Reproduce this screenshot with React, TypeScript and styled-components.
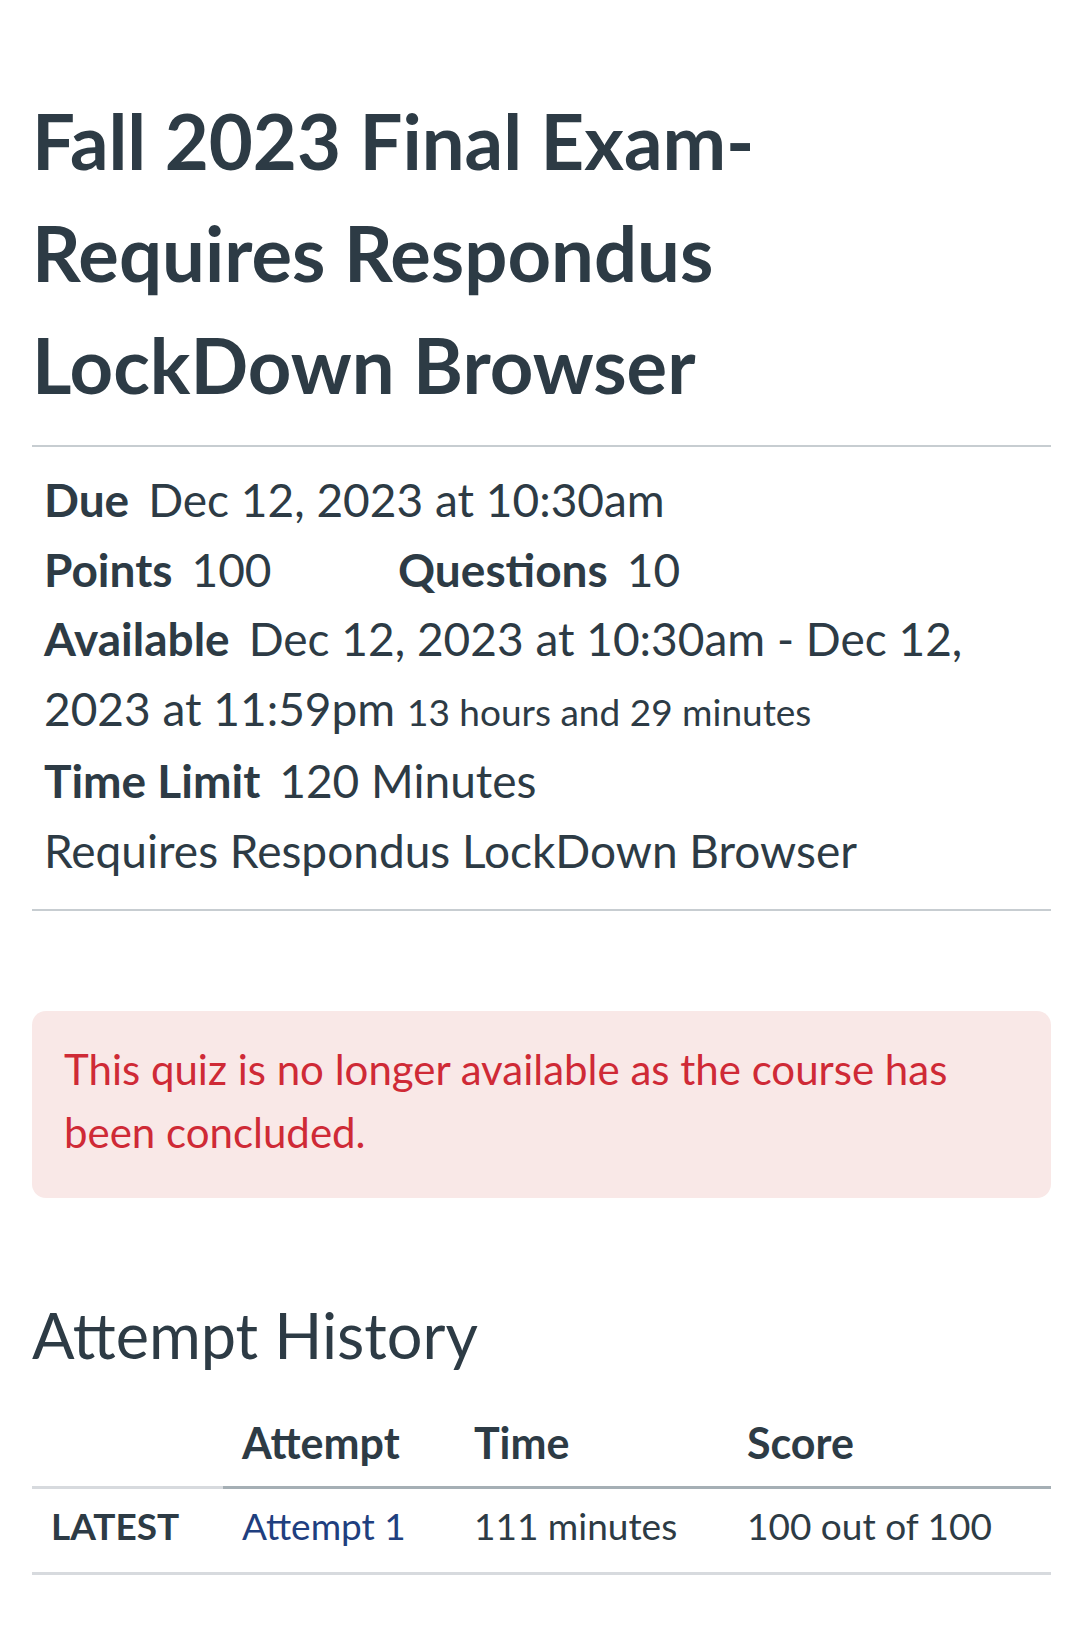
import React from "react";
import styled, { createGlobalStyle } from "styled-components";

const Global = createGlobalStyle`
  html, body { margin: 0; padding: 0; background: #ffffff; }
  body { font-family: Lato, "Noto Sans", sans-serif; color: #2d3b45; }
  *, *::before, *::after { box-sizing: border-box; }
`;

const Page = styled.main`
  padding: 85px 29px 40px 32px;
`;

const Title = styled.h1`
  margin: 0;
  font-size: 76px;
  line-height: 112px;
  font-weight: 700;
  color: #2d3b45;
  padding-right: 280px;
`;

const Rule = styled.hr`
  margin: 0;
  border: none;
  border-top: 2px solid #c7cdd1;
`;

const TitleRule = styled(Rule)`
  margin-top: 24px;
`;

const Details = styled.div`
  padding: 18px 12px 24px 12px;
  font-size: 46px;
  line-height: 69.5px;
`;

const Line = styled.div`
  display: flex;
  flex-wrap: wrap;
`;

const Para = styled.div``;

const Item = styled.span<{ $width?: number }>`
  display: inline-block;
  ${(p) => (p.$width ? `width: ${p.$width}px;` : "")}
`;

const Label = styled.span`
  font-weight: 700;
  margin-right: 19px;
`;

const Small = styled.span`
  font-size: 37px;
`;

const Alert = styled.div`
  margin-top: 100px;
  background: #f9e8e7;
  border-radius: 14px;
  padding: 27px 60px 34px 32px;
  color: #cf2a36;
  font-size: 42px;
  line-height: 63px;
`;

const SectionTitle = styled.h2`
  margin: 94px 0 22px 0;
  font-size: 63px;
  line-height: 86px;
  font-weight: 400;
  color: #2d3b45;
`;

const Table = styled.table`
  width: 100%;
  border-collapse: collapse;
  line-height: 48px;
  table-layout: fixed;
`;

const Th = styled.th<{ $w: number; $light?: boolean }>`
  width: ${(p) => p.$w}px;
  text-align: left;
  font-size: 43px;
  font-weight: 700;
  padding: 19px 19px;
  border-bottom: 3px solid ${(p) => (p.$light ? "#d7dade" : "#a5afb5")};
`;

const Td = styled.td`
  font-size: 37px;
  padding: 13px 19px 22px 19px;
  border-bottom: 3px solid #d7dade;
`;

const Badge = styled.span`
  font-weight: 700;
  text-transform: uppercase;
`;

const AttemptLink = styled.a`
  color: #1f3f7f;
  text-decoration: none;
`;

export default function App() {
  return (
    <>
      <Global />
      <Page>
        <Title>Fall 2023 Final Exam- Requires Respondus LockDown Browser</Title>
        <TitleRule />
        <Details>
          <Line>
            <Item>
              <Label>Due</Label>Dec 12, 2023 at 10:30am
            </Item>
          </Line>
          <Line>
            <Item $width={354}>
              <Label>Points</Label>100
            </Item>
            <Item>
              <Label>Questions</Label>10
            </Item>
          </Line>
          <Para>
            <Label>Available</Label>Dec 12, 2023 at 10:30am - Dec 12, 2023 at 11:59pm{" "}
            <Small>13 hours and 29 minutes</Small>
          </Para>
          <Line>
            <Item>
              <Label>Time Limit</Label>120 Minutes
            </Item>
          </Line>
          <Para>Requires Respondus LockDown Browser</Para>
        </Details>
        <Rule />
        <Alert>This quiz is no longer available as the course has been concluded.</Alert>
        <SectionTitle>Attempt History</SectionTitle>
        <Table>
          <thead>
            <tr>
              <Th $w={191} $light>
                <span />
              </Th>
              <Th $w={232}>Attempt</Th>
              <Th $w={273}>Time</Th>
              <Th $w={323}>Score</Th>
            </tr>
          </thead>
          <tbody>
            <tr>
              <Td>
                <Badge>Latest</Badge>
              </Td>
              <Td>
                <AttemptLink href="#">Attempt 1</AttemptLink>
              </Td>
              <Td>111 minutes</Td>
              <Td>100 out of 100</Td>
            </tr>
          </tbody>
        </Table>
      </Page>
    </>
  );
}
